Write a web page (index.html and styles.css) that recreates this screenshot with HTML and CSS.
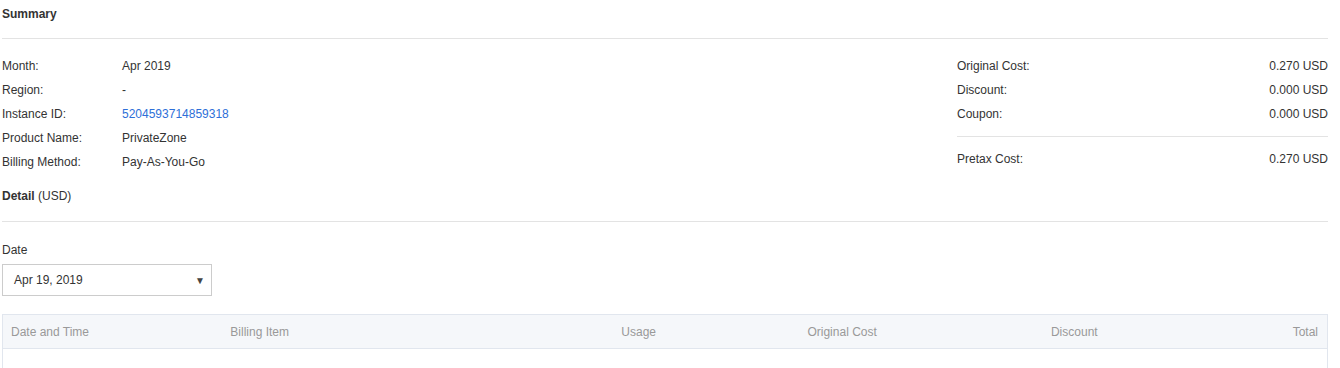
FILE: index.html
```html
<!DOCTYPE html>
<html lang="en">

<head>
    <meta charset="UTF-8">
    <title>Bill Detail</title>
    <link rel="stylesheet" href="styles.css">
</head>

<body>
    <div class="page">
        <div class="section-title">Summary</div>

        <div class="summary">
            <div class="info">
                <div class="row"><span class="label">Month:</span><span>Apr 2019</span></div>
                <div class="row"><span class="label">Region:</span><span>-</span></div>
                <div class="row"><span class="label">Instance ID:</span><a href="#" class="link">5204593714859318</a></div>
                <div class="row"><span class="label">Product Name:</span><span>PrivateZone</span></div>
                <div class="row"><span class="label">Billing Method:</span><span>Pay-As-You-Go</span></div>
            </div>
            <div class="costs">
                <div class="row cost-row"><span>Original Cost:</span><span>0.270 USD</span></div>
                <div class="row cost-row"><span>Discount:</span><span>0.000 USD</span></div>
                <div class="row cost-row"><span>Coupon:</span><span>0.000 USD</span></div>
                <div class="divider"></div>
                <div class="row cost-row"><span>Pretax Cost:</span><span>0.270 USD</span></div>
            </div>
        </div>

        <div class="section-title detail-title">Detail <span class="unit">(USD)</span></div>

        <div class="field">
            <label class="field-label" for="date">Date</label>
            <div class="select-box" id="date">
                <span>Apr 19, 2019</span>
                <span class="arrow">&#9660;</span>
            </div>
        </div>

        <table class="bill-table">
            <thead>
                <tr>
                    <th>Date and Time</th>
                    <th>Billing Item</th>
                    <th class="num">Usage</th>
                    <th class="num">Original Cost</th>
                    <th class="num">Discount</th>
                    <th class="num">Total</th>
                </tr>
            </thead>
            <tbody>
                <tr class="empty">
                    <td colspan="6"></td>
                </tr>
            </tbody>
        </table>
    </div>
</body>

</html>
```

FILE: styles.css
```css
body {
    margin: 0;
    font-family: "Liberation Sans", Arial, sans-serif;
    font-size: 12px;
    color: #333333;
    background: #ffffff;
}

.page {
    margin: 0 12px 0 2px;
}

.section-title {
    font-weight: bold;
    line-height: 18px;
    padding: 5px 0 15px;
    border-bottom: 1px solid #e3e3e3;
}

.detail-title {
    margin-top: 8px;
    padding-bottom: 16px;
}

.unit {
    font-weight: normal;
}

.summary {
    display: flex;
    justify-content: space-between;
    margin-top: 15px;
}

.row {
    display: flex;
    line-height: 24px;
}

.label {
    width: 120px;
}

.link {
    color: #2e6fd8;
    text-decoration: none;
}

.costs {
    width: 371px;
}

.cost-row {
    justify-content: space-between;
}

.divider {
    border-top: 1px solid #e3e3e3;
    margin: 10px 0 10px;
}

.field {
    margin-top: 19px;
}

.field-label {
    display: block;
    line-height: 18px;
}

.select-box {
    box-sizing: border-box;
    width: 210px;
    height: 32px;
    margin-top: 5px;
    padding: 0 6px 0 11px;
    border: 1px solid #cccccc;
    display: flex;
    align-items: center;
    justify-content: space-between;
}

.arrow {
    font-size: 10px;
    color: #444444;
}

.bill-table {
    width: 100%;
    margin-top: 18px;
    border-collapse: collapse;
    table-layout: fixed;
}

.bill-table th {
    height: 33px;
    padding: 0 8px;
    background: #f5f7fa;
    border-top: 1px solid #e1e6ee;
    border-bottom: 1px solid #e1e6ee;
    color: #999999;
    font-weight: normal;
    text-align: left;
}

.bill-table th:first-child {
    border-left: 1px solid #e1e6ee;
    padding-left: 8px;
}

.bill-table th:nth-child(2) {
    padding-left: 7px;
}

.bill-table th:last-child {
    border-right: 1px solid #e1e6ee;
}

.bill-table th.num {
    text-align: right;
    padding-right: 9px;
}

.bill-table .empty td {
    height: 40px;
    border-left: 1px solid #e1e6ee;
    border-right: 1px solid #e1e6ee;
}
```
